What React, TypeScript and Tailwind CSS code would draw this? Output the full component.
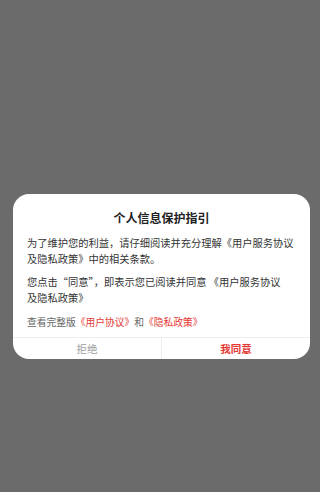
export default function App() {
  return (
    <div
      className="h-[492px] w-[320px] bg-[#6b6b6b] pt-[194px]"
      style={{ fontFamily: '"Noto Sans CJK SC", "Liberation Sans", sans-serif' }}
    >
      <div className="ml-[13px] mr-[10px] overflow-hidden rounded-[16px] bg-white">
        <div className="px-[14px] pt-[16px] pb-[7px]">
          {/* 标题 */}
          <h1 className="text-center text-[12px] font-bold leading-[16px] text-[#222]">个人信息保护指引</h1>
          <p className="mt-[9px] text-[10.25px] leading-[16px] text-[#333]">
            为了维护您的利益，请仔细阅读并充分理解《用户服务协议及隐私政策》中的相关条款。
          </p>
          <p className="mt-[7px] text-[10.25px] leading-[16px] text-[#333]">
            您点击“同意”，即表示您已阅读并同意 《用户服务协议<br />及隐私政策》
          </p>
          <p className="mt-[8px] text-[9.75px] leading-[16px] text-[#666]">
            查看完整版<span className="text-[#e53935]">《用户协议》</span>和<span className="text-[#e53935]">《隐私政策》</span>
          </p>
        </div>
        {/* 操作按钮 */}
        <div className="flex h-[22px] border-t border-[#eeeeee]">
          <button className="flex flex-1 items-center justify-center text-[10.5px] text-[#a0a0a0]">拒绝</button>
          <div className="w-px bg-[#eeeeee]" />
          <button className="flex flex-1 items-center justify-center text-[10.5px] font-bold text-[#e53935]">我同意</button>
        </div>
      </div>
    </div>
  )
}
